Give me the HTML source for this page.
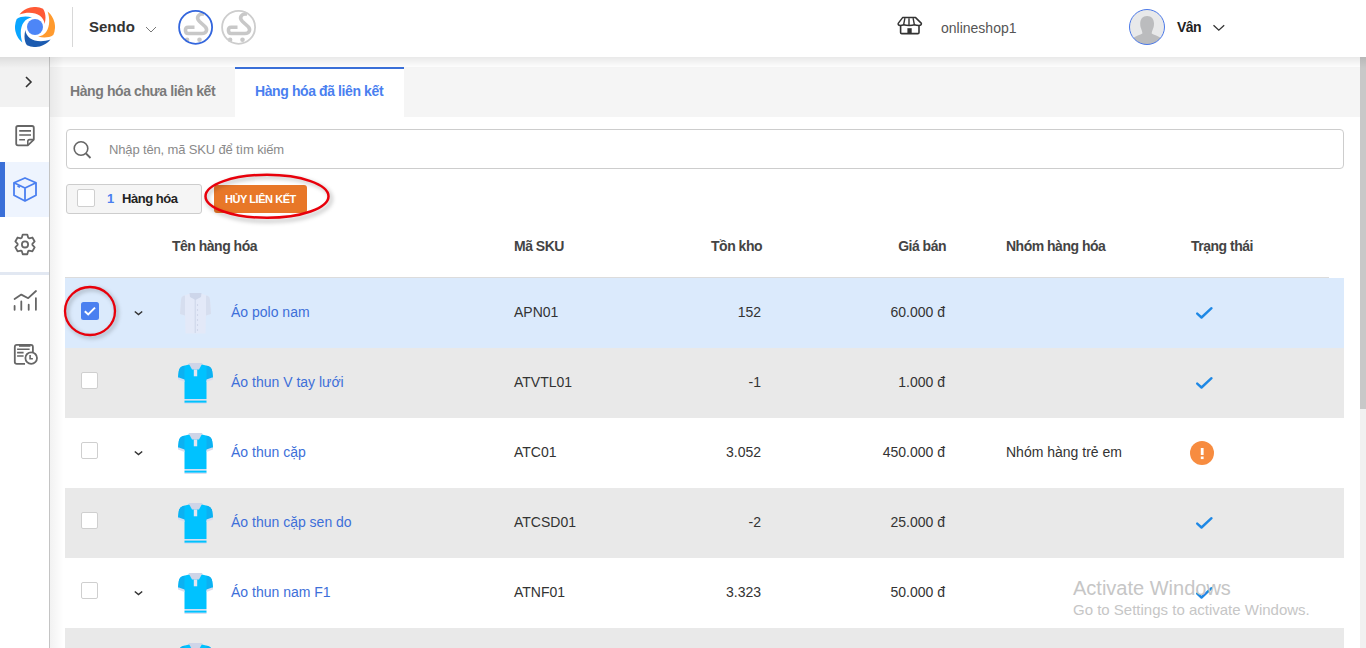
<!DOCTYPE html>
<html><head><meta charset="utf-8">
<style>
*{margin:0;padding:0;box-sizing:border-box}
html,body{width:1366px;height:648px;overflow:hidden;background:#fff;font-family:"Liberation Sans",sans-serif;color:#333}
.abs{position:absolute}
#hdr{position:absolute;left:0;top:0;width:1366px;height:57px;background:#fff;z-index:5}
#hshadow{position:absolute;left:0;top:57px;width:1366px;height:11px;background:linear-gradient(rgba(0,0,0,0.085),rgba(0,0,0,0.0));z-index:4}
#lshadow{position:absolute;left:50px;top:57px;width:14px;height:591px;background:linear-gradient(90deg,rgba(0,0,0,0.05),rgba(0,0,0,0));z-index:4}
#side{position:absolute;left:0;top:57px;width:50px;height:591px;background:#fff;border-right:1px solid #c4c4c4;z-index:3}
#content{position:absolute;left:50px;top:57px;width:1310px;height:591px;background:#fff}
.tabs{position:absolute;left:0;top:10px;width:1310px;height:50px;background:#f5f5f5}
.txt{position:absolute;white-space:nowrap;line-height:1}
.row{position:absolute;left:65px;width:1279px;height:70px}
.th{font-size:14px;font-weight:bold;color:#444;letter-spacing:-0.5px}
.td{font-size:14px;color:#333}
.nm{color:#3d6fd9}
.cb{position:absolute;width:17px;height:17px;background:#fff;border:1px solid #cfcfcf;border-radius:2px}
</style></head><body>

<div id="hdr">
  <svg class="abs" style="left:15px;top:7px" width="40" height="40" viewBox="-20 -20 40 40">
    <g id="pet">
      <path fill="#ff5a36" d="M-15.6 -12.6 A20 20 0 0 1 8 -18.3 C11 -14 11 -8 9.6 -3 C9 -12 -2 -17 -15.6 -12.6Z"/>
    </g>
    <path fill="#ff9a2e" transform="rotate(90)" d="M-15.6 -12.6 A20 20 0 0 1 8 -18.3 C11 -14 11 -8 9.6 -3 C9 -12 -2 -17 -15.6 -12.6Z"/>
    <path fill="#1c5bb0" transform="rotate(180)" d="M-15.6 -12.6 A20 20 0 0 1 8 -18.3 C11 -14 11 -8 9.6 -3 C9 -12 -2 -17 -15.6 -12.6Z"/>
    <path fill="#0aa5ff" transform="rotate(270)" d="M-15.6 -12.6 A20 20 0 0 1 8 -18.3 C11 -14 11 -8 9.6 -3 C9 -12 -2 -17 -15.6 -12.6Z"/>
    <circle cx="0" cy="0" r="8" fill="#4d86f7"/>
  </svg>
  <div class="abs" style="left:72px;top:7px;width:1px;height:40px;background:#d8d8d8"></div>
  <div class="txt" style="left:89px;top:19px;font-size:15px;font-weight:bold;color:#333">Sendo</div>
  <svg class="abs" style="left:145px;top:26px" width="12" height="7" viewBox="0 0 12 7"><path d="M1 1 L6 6 L11 1" fill="none" stroke="#777" stroke-width="1"/></svg>
  <svg class="abs" style="left:176px;top:8px" width="40" height="40" viewBox="0 0 40 40">
    <path d="M18.5 19.2 L12 19.2 C8.6 19.2 8.6 25.5 12 25.5 L26 25.5 C30.5 25.5 32 21.5 29 18.5 L23.5 13.5 C19.5 9.5 22.5 5.2 28 6.2" fill="none" stroke="#c8c8c8" stroke-width="3.6"/>
    <circle cx="11.1" cy="31.8" r="2.3" fill="#c8c8c8"/><circle cx="23.5" cy="31.8" r="2.3" fill="#c8c8c8"/>
    <circle cx="19.6" cy="19.3" r="16.5" fill="none" stroke="#3366dd" stroke-width="1.8"/>
  </svg>
  <svg class="abs" style="left:219px;top:8px" width="40" height="40" viewBox="0 0 40 40">
    <path d="M18.5 19.2 L12 19.2 C8.6 19.2 8.6 25.5 12 25.5 L26 25.5 C30.5 25.5 32 21.5 29 18.5 L23.5 13.5 C19.5 9.5 22.5 5.2 28 6.2" fill="none" stroke="#c8c8c8" stroke-width="3.6"/>
    <circle cx="11.1" cy="31.8" r="2.3" fill="#c8c8c8"/><circle cx="23.5" cy="31.8" r="2.3" fill="#c8c8c8"/>
    <circle cx="19.6" cy="19.3" r="16.5" fill="none" stroke="#cdcdcd" stroke-width="1.8"/>
  </svg>
  <!-- store -->
  <svg class="abs" style="left:897px;top:16px" width="26" height="20" viewBox="0 0 26 20">
    <path d="M5.6 1.6 H18.6 L24.4 7.4 Q24.6 9.4 22 9.4 Q19 9.4 17.5 8.8 Q15.5 9.4 12.2 9.4 Q8.8 9.4 6.8 8.8 Q5 9.4 3.2 9.4 Q0.8 9.4 1.2 7.4 Z" fill="none" stroke="#333" stroke-width="1.5" stroke-linejoin="round"/>
    <path d="M7.9 2.2 L6.6 8.8 M12 2.2 V9 M16.1 2.2 L17.4 8.8" stroke="#333" stroke-width="1.4"/>
    <path d="M3.6 9.4 V16.4 Q3.6 17.6 4.8 17.6 H20.8 Q22 17.6 22 16.4 V9.4" fill="none" stroke="#333" stroke-width="1.6"/>
    <rect x="10.4" y="12.2" width="4.3" height="5.4" fill="#333"/>
  </svg>
  <div class="txt" style="left:941px;top:21px;font-size:14px;color:#555">onlineshop1</div>
  <svg class="abs" style="left:1129px;top:9px" width="36" height="36" viewBox="0 0 36 36">
    <defs><clipPath id="av"><circle cx="18" cy="18" r="17.5"/></clipPath></defs>
    <circle cx="18" cy="18" r="17.5" fill="#e8e9ea"/>
    <g clip-path="url(#av)" fill="#bbbcbe">
      <path d="M18.1 7 C22.5 7 25 10 25 14.5 C25 17 24.6 18.5 24.2 19.3 C23.5 21.5 22.7 23 22.7 24.5 C25 25.8 28 26.5 31 28.5 L32 36 H4 L5 28.5 C8 26.5 11 25.8 13.4 24.5 C13.4 23 12.7 21.5 12 19.3 C11.6 18.5 11.2 17 11.2 14.5 C11.2 10 13.7 7 18.1 7Z"/>
    </g>
    <circle cx="18" cy="18" r="17.5" fill="none" stroke="#4a78e8" stroke-width="1"/>
  </svg>
  <div class="txt" style="left:1177px;top:20px;font-size:14px;font-weight:bold;color:#222;letter-spacing:-0.5px">Vân</div>
  <svg class="abs" style="left:1212px;top:24px" width="14" height="8" viewBox="0 0 14 8"><path d="M1.5 1.2 L6.8 6.2 L12.2 1.2" fill="none" stroke="#333" stroke-width="1.3"/></svg>
</div>
<div id="hshadow"></div><div id="lshadow"></div>

<div id="side">
  <div class="abs" style="left:0;top:0;width:49px;height:50px;background:#f2f2f2"></div>
  <svg class="abs" style="left:23.7px;top:17.5px" width="10" height="14" viewBox="0 0 10 14"><path d="M2 2 L7 7 L2 12" fill="none" stroke="#333" stroke-width="1.6"/></svg>
  <!-- doc icon -->
  <svg class="abs" style="left:13px;top:67px" width="24" height="24" viewBox="0 0 24 24">
    <path d="M3.2 3.8 Q3.2 2 5 2 H19 Q20.8 2 20.8 3.8 V15.6 L14.8 21.3 H5 Q3.2 21.3 3.2 19.5Z" fill="none" stroke="#666" stroke-width="1.8" stroke-linejoin="round"/>
    <path d="M14.8 21.3 V17.4 Q14.8 15.6 16.6 15.6 H20.8" fill="none" stroke="#666" stroke-width="1.6"/>
    <path d="M6.2 6.9 H18 M6.2 11 H18 M6.2 15.8 H12" stroke="#666" stroke-width="1.6"/>
  </svg>
  <!-- active -->
  <div class="abs" style="left:0;top:105px;width:49px;height:55px;background:#eef4fe"></div>
  <div class="abs" style="left:0;top:105px;width:5px;height:55px;background:#3a6fd8"></div>
  <svg class="abs" style="left:12px;top:119px" width="26" height="27" viewBox="0 0 26 27">
    <path d="M13 2 L24 6.8 V19.2 L13 25 L2 19.2 V6.8Z" fill="none" stroke="#4a7ff0" stroke-width="1.8" stroke-linejoin="round"/>
    <path d="M2 6.8 L13 12 L24 6.8 M13 12 V25" fill="none" stroke="#4a7ff0" stroke-width="1.8" stroke-linejoin="round"/>
    <path d="M5.5 10 L8 11.2" stroke="#4a7ff0" stroke-width="1.6"/>
  </svg>
  <!-- gear -->
  <svg class="abs" style="left:13px;top:175px" width="24" height="25" viewBox="0 0 24 25" overflow="visible">
    <path d="M8.76 5.75 L9.73 2.56 L14.27 2.56 L15.24 5.75 L16.14 6.27 L19.39 5.51 L21.66 9.45 L19.38 11.88 L19.38 12.92 L21.66 15.35 L19.39 19.29 L16.14 18.53 L15.24 19.05 L14.27 22.24 L9.73 22.24 L8.76 19.05 L7.86 18.53 L4.61 19.29 L2.34 15.35 L4.62 12.92 L4.62 11.88 L2.34 9.45 L4.61 5.51 L7.86 6.27Z" fill="none" stroke="#666" stroke-width="1.8" stroke-linejoin="round"/>
    <circle cx="12" cy="12.4" r="3.1" fill="none" stroke="#666" stroke-width="1.8"/>
  </svg>
  <div class="abs" style="left:0;top:215px;width:49px;height:3px;background:#e2e8f2"></div>
  <!-- chart -->
  <svg class="abs" style="left:12px;top:231px" width="26" height="26" viewBox="0 0 26 26">
    <path d="M2.6 11 L9.3 6.6 L16.2 10.2 L24 3" fill="none" stroke="#666" stroke-width="1.8" stroke-linecap="round" stroke-linejoin="round"/>
    <path d="M2.6 18 V21.8 M9.3 13.5 V21.8 M16.7 16.7 V21.8 M23.9 10.2 V21.8" stroke="#666" stroke-width="1.8" stroke-linecap="round"/>
  </svg>
  <!-- report clock -->
  <svg class="abs" style="left:12px;top:286px" width="28" height="24" viewBox="0 0 28 24">
    <path d="M13 20.9 H4.8 Q2.8 20.9 2.8 18.9 V3.9 Q2.8 1.9 4.8 1.9 H18.9 Q20.9 1.9 20.9 3.9 V9" fill="none" stroke="#666" stroke-width="1.8"/>
    <path d="M7 2.6 H18.5" stroke="#666" stroke-width="2.4"/>
    <path d="M5.1 6.3 H17.6 M5.1 9.6 H11.6 M5.1 13 H11.6" stroke="#666" stroke-width="1.6"/>
    <circle cx="19.2" cy="15.1" r="5.8" fill="#fff" stroke="#666" stroke-width="1.8"/>
    <path d="M18.1 12.1 V15.8 H20.9" fill="none" stroke="#666" stroke-width="1.6"/>
  </svg>
</div>

<div id="content">
  <div class="tabs">
    <div class="txt" style="left:20px;top:17px;font-size:14px;font-weight:bold;color:#7a7a7a;letter-spacing:-0.4px">Hàng hóa chưa liên kết</div>
    <div class="abs" style="left:185px;top:0;width:169px;height:50px;background:#fff;border-top:2px solid #3a6fd8"></div>
    <div class="txt" style="left:205px;top:17px;font-size:14px;font-weight:bold;color:#4a7ff0;letter-spacing:-0.4px">Hàng hóa đã liên kết</div>
  </div>
  <!-- search -->
  <div class="abs" style="left:16px;top:72px;width:1278px;height:40px;border:1px solid #cdcdcd;border-radius:4px;background:#fff"></div>
  <svg class="abs" style="left:22px;top:83px" width="20" height="20" viewBox="0 0 20 20">
    <circle cx="9" cy="8.5" r="6.8" fill="none" stroke="#666" stroke-width="1.6"/>
    <path d="M14 13.5 L18.5 18" stroke="#666" stroke-width="1.8"/>
  </svg>
  <div class="txt" style="left:59px;top:86px;font-size:13px;color:#8a8a8a;letter-spacing:-0.15px">Nhập tên, mã SKU để tìm kiếm</div>
  <!-- selection -->
  <div class="abs" style="left:16px;top:127px;width:136px;height:30px;border:1px solid #cdcdcd;border-radius:3px;background:#f5f5f5"></div>
  <div class="cb" style="left:27px;top:132px;width:17.5px;height:17.5px"></div>
  <div class="txt" style="left:57px;top:135px;font-size:13px;font-weight:bold;color:#4a7ff0">1</div>
  <div class="txt" style="left:72px;top:135px;font-size:13px;font-weight:bold;color:#222;letter-spacing:-0.45px">Hàng hóa</div>
  <div class="abs" style="left:164px;top:128px;width:93px;height:28px;border-radius:3px;background:#e87728"></div>
  <div class="txt" style="left:175px;top:137px;font-size:11px;font-weight:bold;color:#fff;letter-spacing:-0.45px">HỦY LIÊN KẾT</div>
</div>

<!-- table -->
<div class="txt th" style="left:172px;top:239px">Tên hàng hóa</div>
<div class="txt th" style="left:514px;top:239px">Mã SKU</div>
<div class="txt th r" style="right:604px;top:239px">Tồn kho</div>
<div class="txt th r" style="right:420px;top:239px">Giá bán</div>
<div class="txt th" style="left:1006px;top:239px">Nhóm hàng hóa</div>
<div class="txt th" style="left:1191px;top:239px">Trạng thái</div>
<div class="abs" style="left:65px;top:277px;width:1264px;height:1px;background:#dcdcdc"></div>
<div class="row" style="top:278px;background:#dbeafc"><svg class="abs" style="left:16px;top:24px" width="18" height="18" viewBox="0 0 18 18"><rect width="18" height="18" rx="2.5" fill="#4a80f0"/><path d="M3.8 9.2 L7.2 12.4 L14 5.6" fill="none" stroke="#fff" stroke-width="2"/></svg><svg class="abs" style="left:68px;top:31px" width="12" height="8" viewBox="0 0 12 8"><path d="M1.8 2.5 L5.5 5.6 L9.2 2.5" fill="none" stroke="#333" stroke-width="1.5"/></svg><svg class="abs" style="left:115px;top:15px" width="31" height="41" viewBox="0 0 31 41">
<path d="M10 0.5 L3 3 Q1 4 1 7 L0 21 L5 22.5 L5.5 40.5 H25.5 L26 22.5 L31 21 L30 7 Q30 4 28 3 L21 0.5Z" fill="#e3e9f8"/>
<path d="M1 7 Q1 4 3 3 L5 2.5 L5 22.5 L0 21Z M30 7 Q30 4 28 3 L26 2.5 L26 22.5 L31 21Z" fill="#d6deef"/>
<path d="M9.5 0 H21.5 L21 4 L15.5 7 L10 4Z" fill="#cdd6ea"/>
<path d="M15.2 6 V40" stroke="#cdd5e8" stroke-width="1"/>
<g fill="#c5cde2"><circle cx="17.5" cy="12" r="0.7"/><circle cx="17.5" cy="17" r="0.7"/><circle cx="17.5" cy="22" r="0.7"/><circle cx="17.5" cy="27" r="0.7"/><circle cx="17.5" cy="32" r="0.7"/><circle cx="17.5" cy="37" r="0.7"/></g>
</svg><div class="txt td nm" style="left:166px;top:27px">Áo polo nam</div><div class="txt td" style="left:449px;top:27px">APN01</div><div class="txt td r" style="right:583px;top:27px">152</div><div class="txt td r" style="right:399px;top:27px">60.000 đ</div><svg class="abs" style="left:1129.6px;top:27px" width="20" height="16" viewBox="0 0 20 16"><path d="M2.2 8.6 L6.5 12.5 L16.5 3.2" fill="none" stroke="#1e88e5" stroke-width="2.4" stroke-linecap="round" stroke-linejoin="round"/></svg></div>
<div class="row" style="top:348px;background:#e9e9e9"><div class="cb" style="left:16px;top:24px"></div><svg class="abs" style="left:113px;top:15px" width="35" height="41" viewBox="0 0 35 41">
<path d="M11 1.5 L5 3 Q1.5 4 0.8 8 L0 15 L6.5 17.5 L6.5 36 H28.5 V17.5 L35 15 L34.2 8 Q33.5 4 30 3 L24 1.5Z" fill="#00c2ff"/>
<path d="M0.8 8 Q1.5 4 5 3 L6.5 2.7 L6.5 17.5 L0 15Z M34.2 8 Q33.5 4 30 3 L28.5 2.7 L28.5 17.5 L35 15Z" fill="#0cb1f2"/>
<path d="M0.2 14.2 L6.5 16.6 V19 L0 16.6Z M34.8 14.2 L28.5 16.6 V19 L35 16.6Z" fill="#d9ddef"/>
<path d="M10.5 0 H24.5 L21 6.5 H14Z" fill="#cfd5e8"/>
<rect x="15.8" y="6.5" width="3.4" height="6.8" fill="#e1e5f0"/>
<rect x="6.5" y="36" width="22" height="1.6" fill="#d9ddef"/>
<rect x="6.5" y="37.6" width="22" height="2.2" fill="#00c2ff"/>
<rect x="6.5" y="39.8" width="22" height="1.2" fill="#d9ddef"/>
</svg><div class="txt td nm" style="left:166px;top:27px">Áo thun V tay lưới</div><div class="txt td" style="left:449px;top:27px">ATVTL01</div><div class="txt td r" style="right:583px;top:27px">-1</div><div class="txt td r" style="right:399px;top:27px">1.000 đ</div><svg class="abs" style="left:1129.6px;top:27px" width="20" height="16" viewBox="0 0 20 16"><path d="M2.2 8.6 L6.5 12.5 L16.5 3.2" fill="none" stroke="#1e88e5" stroke-width="2.4" stroke-linecap="round" stroke-linejoin="round"/></svg></div>
<div class="row" style="top:418px;background:#ffffff"><div class="cb" style="left:16px;top:24px"></div><svg class="abs" style="left:68px;top:31px" width="12" height="8" viewBox="0 0 12 8"><path d="M1.8 2.5 L5.5 5.6 L9.2 2.5" fill="none" stroke="#333" stroke-width="1.5"/></svg><svg class="abs" style="left:113px;top:15px" width="35" height="41" viewBox="0 0 35 41">
<path d="M11 1.5 L5 3 Q1.5 4 0.8 8 L0 15 L6.5 17.5 L6.5 36 H28.5 V17.5 L35 15 L34.2 8 Q33.5 4 30 3 L24 1.5Z" fill="#00c2ff"/>
<path d="M0.8 8 Q1.5 4 5 3 L6.5 2.7 L6.5 17.5 L0 15Z M34.2 8 Q33.5 4 30 3 L28.5 2.7 L28.5 17.5 L35 15Z" fill="#0cb1f2"/>
<path d="M0.2 14.2 L6.5 16.6 V19 L0 16.6Z M34.8 14.2 L28.5 16.6 V19 L35 16.6Z" fill="#d9ddef"/>
<path d="M10.5 0 H24.5 L21 6.5 H14Z" fill="#cfd5e8"/>
<rect x="15.8" y="6.5" width="3.4" height="6.8" fill="#e1e5f0"/>
<rect x="6.5" y="36" width="22" height="1.6" fill="#d9ddef"/>
<rect x="6.5" y="37.6" width="22" height="2.2" fill="#00c2ff"/>
<rect x="6.5" y="39.8" width="22" height="1.2" fill="#d9ddef"/>
</svg><div class="txt td nm" style="left:166px;top:27px">Áo thun cặp</div><div class="txt td" style="left:449px;top:27px">ATC01</div><div class="txt td r" style="right:583px;top:27px">3.052</div><div class="txt td r" style="right:399px;top:27px">450.000 đ</div><div class="txt td" style="left:941px;top:27px">Nhóm hàng trẻ em</div><svg class="abs" style="left:1125px;top:23px" width="24" height="24" viewBox="0 0 24 24"><circle cx="12" cy="12" r="12" fill="#f78c40"/><rect x="10.8" y="7" width="2.8" height="7" fill="#fff"/><rect x="10.8" y="15.5" width="2.8" height="2.6" fill="#fff"/></svg></div>
<div class="row" style="top:488px;background:#e9e9e9"><div class="cb" style="left:16px;top:24px"></div><svg class="abs" style="left:113px;top:15px" width="35" height="41" viewBox="0 0 35 41">
<path d="M11 1.5 L5 3 Q1.5 4 0.8 8 L0 15 L6.5 17.5 L6.5 36 H28.5 V17.5 L35 15 L34.2 8 Q33.5 4 30 3 L24 1.5Z" fill="#00c2ff"/>
<path d="M0.8 8 Q1.5 4 5 3 L6.5 2.7 L6.5 17.5 L0 15Z M34.2 8 Q33.5 4 30 3 L28.5 2.7 L28.5 17.5 L35 15Z" fill="#0cb1f2"/>
<path d="M0.2 14.2 L6.5 16.6 V19 L0 16.6Z M34.8 14.2 L28.5 16.6 V19 L35 16.6Z" fill="#d9ddef"/>
<path d="M10.5 0 H24.5 L21 6.5 H14Z" fill="#cfd5e8"/>
<rect x="15.8" y="6.5" width="3.4" height="6.8" fill="#e1e5f0"/>
<rect x="6.5" y="36" width="22" height="1.6" fill="#d9ddef"/>
<rect x="6.5" y="37.6" width="22" height="2.2" fill="#00c2ff"/>
<rect x="6.5" y="39.8" width="22" height="1.2" fill="#d9ddef"/>
</svg><div class="txt td nm" style="left:166px;top:27px">Áo thun cặp sen do</div><div class="txt td" style="left:449px;top:27px">ATCSD01</div><div class="txt td r" style="right:583px;top:27px">-2</div><div class="txt td r" style="right:399px;top:27px">25.000 đ</div><svg class="abs" style="left:1129.6px;top:27px" width="20" height="16" viewBox="0 0 20 16"><path d="M2.2 8.6 L6.5 12.5 L16.5 3.2" fill="none" stroke="#1e88e5" stroke-width="2.4" stroke-linecap="round" stroke-linejoin="round"/></svg></div>
<div class="row" style="top:558px;background:#ffffff"><div class="cb" style="left:16px;top:24px"></div><svg class="abs" style="left:68px;top:31px" width="12" height="8" viewBox="0 0 12 8"><path d="M1.8 2.5 L5.5 5.6 L9.2 2.5" fill="none" stroke="#333" stroke-width="1.5"/></svg><svg class="abs" style="left:113px;top:15px" width="35" height="41" viewBox="0 0 35 41">
<path d="M11 1.5 L5 3 Q1.5 4 0.8 8 L0 15 L6.5 17.5 L6.5 36 H28.5 V17.5 L35 15 L34.2 8 Q33.5 4 30 3 L24 1.5Z" fill="#00c2ff"/>
<path d="M0.8 8 Q1.5 4 5 3 L6.5 2.7 L6.5 17.5 L0 15Z M34.2 8 Q33.5 4 30 3 L28.5 2.7 L28.5 17.5 L35 15Z" fill="#0cb1f2"/>
<path d="M0.2 14.2 L6.5 16.6 V19 L0 16.6Z M34.8 14.2 L28.5 16.6 V19 L35 16.6Z" fill="#d9ddef"/>
<path d="M10.5 0 H24.5 L21 6.5 H14Z" fill="#cfd5e8"/>
<rect x="15.8" y="6.5" width="3.4" height="6.8" fill="#e1e5f0"/>
<rect x="6.5" y="36" width="22" height="1.6" fill="#d9ddef"/>
<rect x="6.5" y="37.6" width="22" height="2.2" fill="#00c2ff"/>
<rect x="6.5" y="39.8" width="22" height="1.2" fill="#d9ddef"/>
</svg><div class="txt td nm" style="left:166px;top:27px">Áo thun nam F1</div><div class="txt td" style="left:449px;top:27px">ATNF01</div><div class="txt td r" style="right:583px;top:27px">3.323</div><div class="txt td r" style="right:399px;top:27px">50.000 đ</div><svg class="abs" style="left:1129.6px;top:27px" width="20" height="16" viewBox="0 0 20 16"><path d="M2.2 8.6 L6.5 12.5 L16.5 3.2" fill="none" stroke="#1e88e5" stroke-width="2.4" stroke-linecap="round" stroke-linejoin="round"/></svg></div>
<div class="row" style="top:628px;background:#e9e9e9"><div class="cb" style="left:16px;top:24px"></div><svg class="abs" style="left:113px;top:15px" width="35" height="41" viewBox="0 0 35 41">
<path d="M11 1.5 L5 3 Q1.5 4 0.8 8 L0 15 L6.5 17.5 L6.5 36 H28.5 V17.5 L35 15 L34.2 8 Q33.5 4 30 3 L24 1.5Z" fill="#00c2ff"/>
<path d="M0.8 8 Q1.5 4 5 3 L6.5 2.7 L6.5 17.5 L0 15Z M34.2 8 Q33.5 4 30 3 L28.5 2.7 L28.5 17.5 L35 15Z" fill="#0cb1f2"/>
<path d="M0.2 14.2 L6.5 16.6 V19 L0 16.6Z M34.8 14.2 L28.5 16.6 V19 L35 16.6Z" fill="#d9ddef"/>
<path d="M10.5 0 H24.5 L21 6.5 H14Z" fill="#cfd5e8"/>
<rect x="15.8" y="6.5" width="3.4" height="6.8" fill="#e1e5f0"/>
<rect x="6.5" y="36" width="22" height="1.6" fill="#d9ddef"/>
<rect x="6.5" y="37.6" width="22" height="2.2" fill="#00c2ff"/>
<rect x="6.5" y="39.8" width="22" height="1.2" fill="#d9ddef"/>
</svg></div>

<!-- annotations -->
<svg class="abs" style="left:0;top:0;z-index:6;overflow:visible" width="1366" height="648">
  <defs><filter id="sh" x="-20%" y="-30%" width="140%" height="160%"><feGaussianBlur stdDeviation="2"/></filter></defs>
  <ellipse cx="269" cy="199" rx="62" ry="22" fill="none" stroke="#000" stroke-opacity="0.25" stroke-width="3" filter="url(#sh)"/>
  <ellipse cx="267" cy="196.3" rx="61.5" ry="21.5" fill="none" stroke="#e8000b" stroke-width="2.5"/>
  <ellipse cx="92" cy="313" rx="25" ry="24" fill="none" stroke="#000" stroke-opacity="0.25" stroke-width="3" filter="url(#sh)"/>
  <ellipse cx="90" cy="311" rx="25" ry="24" fill="none" stroke="#e8000b" stroke-width="2.3"/>
</svg>
<!-- scrollbar -->
<div class="abs" style="left:1360px;top:57px;width:6px;height:591px;background:#f1f1f1"></div>
<div class="abs" style="left:1360px;top:57px;width:6px;height:352px;background:#c8c8c8"></div>
<!-- windows watermark -->
<div class="txt" style="left:1073px;top:578px;font-size:20px;color:#c6c6c6;z-index:7">Activate Windows</div>
<div class="txt" style="left:1073px;top:602px;font-size:15px;color:#c6c6c6;z-index:7">Go to Settings to activate Windows.</div>
</body></html>
